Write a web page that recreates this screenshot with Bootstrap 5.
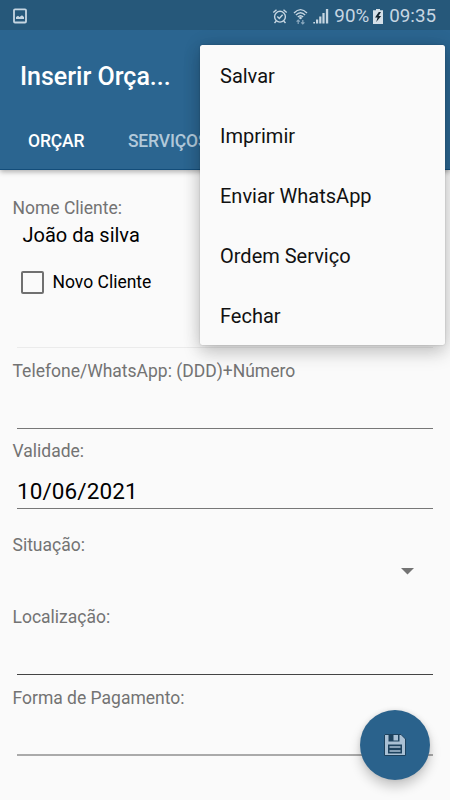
<!DOCTYPE html>
<html lang="pt-BR">
<head>
<meta charset="utf-8">
<meta name="viewport" content="width=device-width, initial-scale=1">
<title>Inserir Orçamento</title>
<link href="https://cdn.jsdelivr.net/npm/bootstrap@5.3.0/dist/css/bootstrap.min.css" rel="stylesheet">
<style>
body{font-family:Roboto,"Liberation Sans",sans-serif;background:#fafafa;color:#000;height:800px}
.status-bar{height:30px;background:#26587a;color:#c6d6e2;font-size:18.8px;line-height:30px;padding:2px 14px 0 12px}
.status-bar svg{display:block;flex:none}
.status-icons{gap:5px}
.status-icons .charge{margin-left:-2px}
.app-header{background:#2b6590;box-shadow:0 2px 5px rgba(0,0,0,.3)}
.app-title{height:93px;font-size:25px;font-weight:500;padding:0 20px}
.app-tabs{height:47px;font-size:17.5px;font-weight:500;letter-spacing:-.15px;border-bottom:1px solid #134d7a}
.app-tabs .nav-link{color:#b2c9da;padding:0;line-height:36px;margin-left:43.5px}
.app-tabs .nav-link.active{color:#fff;margin-left:28px}
.form-area{padding:27px 12.5px 0}
.field{height:69px;margin-bottom:11px}
.field .caption{font-size:17.5px;line-height:22px;color:#737373;display:block}
.field .entry{margin:0 5px 0 4.5px;border-bottom:1px solid #777}
.client{height:151px;margin-bottom:12px}
.client .name{font-size:20px;line-height:24px;padding:4px 0 0 10px}
.client .entry{border-color:#ebebeb}
.client .form-check-input{width:23px;height:23px;border:2px solid #707070;border-radius:2px;margin:0;background-color:transparent}
.client .check-row{font-size:17.5px;padding:23px 0 0 8.5px;gap:8.5px;line-height:24px}
.date-value{font-size:22.5px;line-height:33px;letter-spacing:.1px}
.validity{margin-bottom:25px}
.situation{height:61px}
.situation svg{margin:0 24px 0 auto;display:block}
.place{margin-bottom:12px}
.place .entry{border-color:#444}
.payment .entry{border-bottom:2px solid #aaa}
.popup{position:absolute;left:200px;top:45px;width:245px;height:300px;background:#fafafa;border-radius:2.5px;box-shadow:0 9px 18px rgba(0,0,0,.16),0 0 18px rgba(0,0,0,.14),0 0 2px rgba(0,0,0,.2)}
.popup .list-group-item{height:60px;font-size:20px;padding:1px 20px 0;color:#111;background:transparent;line-height:60px}
.save-fab{position:absolute;left:360px;top:710px;width:70px;height:70px;background:#2a628c;box-shadow:0 7px 12px rgba(0,0,0,.2),0 0 5px rgba(0,0,0,.1)}
</style>
<script src="https://cdn.jsdelivr.net/npm/bootstrap@5.3.0/dist/js/bootstrap.bundle.min.js"></script>
</head>
<body class="position-relative overflow-hidden">
<header class="app-header position-relative">
  <div class="status-bar d-flex align-items-center">
    <svg width="16" height="16" viewBox="0 0 16 16"><rect x="2" y="1.300" width="12" height="13.200" rx="1" fill="none" stroke="currentColor" stroke-width="1.800"/><path d="M4 11V9l2-1.300L7.500 9 10 7.200 12 9v2z" fill="currentColor"/></svg>
    <div class="status-icons d-flex align-items-center ms-auto">
      <svg width="16" height="17" viewBox="0 0 16 17" fill="none" stroke="currentColor" stroke-width="1.400"><circle cx="8" cy="8.700" r="5.400"/><path d="M1.300 4.500 4.500 1.700M14.700 4.500 11.500 1.700M4.300 13l-1.800 2M11.700 13l1.800 2M5.300 8.500l2 2 3.300-3.700"/></svg>
      <svg width="15" height="17" viewBox="-.5 0 15 17" fill="none" stroke="currentColor" stroke-width="1.400"><path d="M.5 5Q7-1.700 13.500 5M2.400 7Q7 2.400 11.600 7M4.300 9Q7 6.400 9.700 9"/><circle cx="7" cy="10" r="1.300" fill="currentColor" stroke="none"/><g stroke="#8ba9bf" stroke-width="1.200"><path d="M4.700 16v-4M3.100 13.600 4.700 12l1.600 1.600M9.300 12v4M7.700 14.400 9.300 16l1.600-1.600"/></g></svg>
      <svg width="16" height="16" viewBox="0 0 16 16" fill="currentColor"><path d="M.3 14h1.700v1.500H.3zM3 11.500h2.200v4H3zM6.200 8.500h2.200v7H6.200zM9.400 5h2.200v10.500H9.400zM12.900 1h2.300v14.500h-2.300z"/></svg>
      <span>90%</span>
      <svg class="charge" width="12" height="17" viewBox="0 0 12 17"><path d="M4 1h4v1.200h3V16H1V2.200h3z" fill="#d5e0e8"/><path d="M6.800 4 3 9.500h2.600L4.200 14 9.200 8H6.500L9 4z" fill="#14242f"/></svg>
      <span>09:35</span>
    </div>
  </div>
  <div class="app-title d-flex align-items-center text-white">Inserir Orça...</div>
  <nav class="nav app-tabs flex-nowrap"><a class="nav-link active" href="#">ORÇAR</a><a class="nav-link" href="#">SERVIÇOS</a></nav>
</header>
<main class="form-area">
  <div class="field client d-flex flex-column">
    <span class="caption">Nome Cliente:</span>
    <div class="name">João da silva</div>
    <label class="check-row d-flex align-items-center"><input class="form-check-input" type="checkbox">Novo Cliente</label>
    <div class="entry mt-auto"></div>
  </div>
  <div class="field d-flex flex-column"><span class="caption">Telefone/WhatsApp: (DDD)+Número</span><div class="entry mt-auto"></div></div>
  <div class="field validity d-flex flex-column"><span class="caption">Validade:</span><div class="entry date-value mt-auto">10/06/2021</div></div>
  <div class="field situation"><span class="caption">Situação:</span><svg width="13" height="20" viewBox="0 0 13 20"><path d="M0 12h13l-6.500 6.500z" fill="#737373"/></svg></div>
  <div class="field place d-flex flex-column"><span class="caption">Localização:</span><div class="entry mt-auto"></div></div>
  <div class="field payment d-flex flex-column"><span class="caption">Forma de Pagamento:</span><div class="entry mt-auto"></div></div>
</main>
<div class="popup list-group list-group-flush">
  <a class="list-group-item border-0" href="#">Salvar</a>
  <a class="list-group-item border-0" href="#">Imprimir</a>
  <a class="list-group-item border-0" href="#">Enviar WhatsApp</a>
  <a class="list-group-item border-0" href="#">Ordem Serviço</a>
  <a class="list-group-item border-0" href="#">Fechar</a>
</div>
<button class="save-fab btn rounded-circle border-0 p-0 d-flex align-items-center justify-content-center" aria-label="Salvar">
  <svg width="24" height="24" viewBox="0 0 24 24"><path d="M2 1.500h16l4.500 4.500v16.500H1.500V2z" fill="#a9c0d4" stroke="#1d425e"/><path d="M5.500 1h11v7.500h-11z" fill="#1d425e"/><path d="M10.500 2H15v5.500h-4.500z" fill="#a9c0d4"/><path d="M5 11.500h14v9H5z" fill="#1d425e"/><path d="M6.500 14h11M6.500 18h11" stroke="#a9c0d4" stroke-width="1.700"/></svg>
</button>
</body>
</html>
